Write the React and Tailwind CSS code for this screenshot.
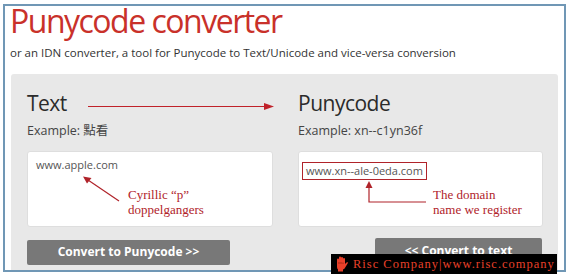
import React from "react";

const sans = { fontFamily: '"Open Sans", "Noto Sans", sans-serif' };
const serif = { fontFamily: '"Liberation Serif", "Times New Roman", serif' };

function HandIcon() {
  return (
    <svg width="14" height="16" viewBox="0 0 14 16" className="shrink-0">
      <path
        d="M2 7 L2 3.5 Q2 2.5 3 2.5 Q4 2.5 4 3.5 L4 6 L4 1.5 Q4 0.5 5 0.5 Q6 0.5 6 1.5 L6 6 L6 2 Q6 1 7 1 Q8 1 8 2 L8 6.5 L8 3 Q8 2 9 2 Q10 2 10 3 L10 8 L11.5 6.5 Q12.5 5.8 13.2 6.6 L10.5 11 Q9.5 13 8 13.5 L8 15.5 L3 15.5 L3 13.5 Q2 12.5 2 11 Z"
        fill="#e8402a"
      />
      <path d="M4 6 L4 8 M6 6 L6 8 M8 6.5 L8 8" stroke="#7a1508" strokeWidth="0.6" />
    </svg>
  );
}

export default function App() {
  return (
    <div className="w-[569px] h-[278px] bg-white overflow-hidden" style={sans}>
      <div className="relative mt-[4px] ml-[3px] w-[563px] h-[268px] border-2 border-[#7097b5] flex flex-col">
        {/* HEADER */}
        <div className="pl-[5px]">
          <h1 className="text-[32px] leading-[30px] tracking-[-1.5px] text-[#c9312a] font-normal">
            Punycode converter
          </h1>
          <p className="mt-[9px] text-[11.5px] leading-[16px] text-[#333]">
            or an IDN converter, a tool for Punycode to Text/Unicode and vice-versa conversion
          </p>
        </div>

        {/* PANEL */}
        <div className="relative mt-[13px] mx-[6px] flex-1 bg-[#e8e8e8] rounded-t-[3px] pl-[16px] pr-[15px] pt-[15px]">
          <svg className="absolute left-[77px] top-[28px]" width="190" height="9" viewBox="0 0 190 9">
            <line x1="0" y1="4.5" x2="180" y2="4.5" stroke="#c0222a" strokeWidth="1.2" />
            <path d="M176 1 L186 4.5 L176 8 Z" fill="#c0222a" />
          </svg>

          <div className="grid grid-cols-[246px_245px] gap-x-[25px]">
            {/* LEFT */}
            <div className="flex flex-col">
              <h2 className="text-[21px] leading-[28px] text-[#2b2b2b] tracking-[-0.5px]">Text</h2>
              <div className="mt-[5px] text-[12.5px] leading-[18px] text-[#444]" style={{ fontFamily: '"Open Sans", "Noto Sans CJK SC", sans-serif' }}>
                Example: 點看
              </div>
              <div className="relative mt-[11px] h-[76px] bg-white rounded-[3px] border border-[#dedede] pl-[8px] pt-[6px]">
                <div className="text-[11px] leading-[14px] text-[#555]">www.apple.com</div>
                <svg className="absolute left-0 top-0" width="246" height="76" viewBox="0 0 246 76">
                  <line x1="91" y1="49" x2="60" y2="28" stroke="#b0232a" strokeWidth="1.2" />
                  <path d="M55 24.5 L63.5 26 L59 31.5 Z" fill="#b0232a" />
                </svg>
                <div className="absolute left-[100px] top-[35px] text-[13px] leading-[15px] text-[#b0232a]" style={serif}>
                  <div>Cyrillic “p”</div>
                  <div>doppelgangers</div>
                </div>
              </div>
              <div className="mt-[11px]">
                <button className="w-[203px] h-[25px] bg-[#787878] rounded-[2px] text-white text-[12px] font-bold">
                  Convert to Punycode &gt;&gt;
                </button>
              </div>
            </div>

            {/* RIGHT */}
            <div className="flex flex-col">
              <h2 className="text-[21px] leading-[28px] text-[#2b2b2b] tracking-[-0.5px]">Punycode</h2>
              <div className="mt-[5px] text-[12.5px] leading-[18px] text-[#444]">Example: xn--c1yn36f</div>
              <div className="relative mt-[11px] h-[76px] bg-white rounded-[3px] border border-[#dedede] pl-[3px] pt-[5px]">
                <div className="inline-block border border-[#b0232a] px-[3px] text-[11px] leading-[16px] text-[#555]">
                  www.xn--ale-0eda.com
                </div>
                <svg className="absolute left-0 top-0" width="245" height="76" viewBox="0 0 245 76">
                  <polyline points="127,50 70,50 70,34" fill="none" stroke="#b0232a" strokeWidth="1.2" />
                  <path d="M66.5 36 L70 29 L73.5 36 Z" fill="#b0232a" />
                </svg>
                <div className="absolute left-[134px] top-[35px] text-[13px] leading-[15px] text-[#b0232a]" style={serif}>
                  <div>The domain</div>
                  <div>name we register</div>
                </div>
              </div>
              <div className="mt-[11px] flex justify-end">
                <button className="w-[167px] h-[25px] mr-[1px] bg-[#787878] rounded-[2px] text-white text-[12px] font-bold">
                  &lt;&lt; Convert to text
                </button>
              </div>
            </div>
          </div>
        </div>

        {/* WATERMARK */}
        <div className="absolute left-[326px] top-[248px] w-[226px] h-[20px] bg-black flex items-center gap-[4px] pl-[4px]">
          <HandIcon />
          <span className="text-[12.5px] leading-none tracking-[1px] text-[#e8402a] whitespace-nowrap" style={serif}>
            Risc Company|www.risc.company
          </span>
        </div>
      </div>
    </div>
  );
}
